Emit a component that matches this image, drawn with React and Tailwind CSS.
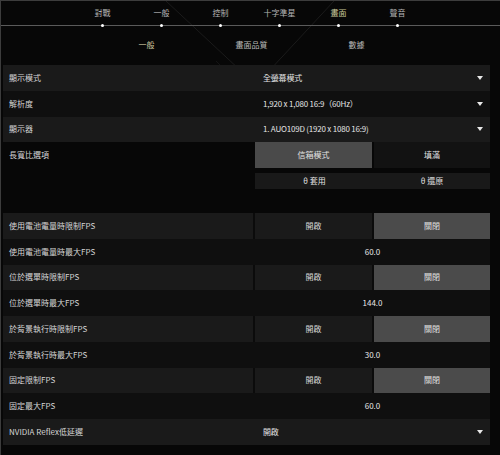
import React from "react";

const FONT = { fontFamily: '"Noto Sans CJK TC", "Noto Sans", sans-serif' };

const navItems = ["對戰", "一般", "控制", "十字準星", "畫面", "聲音"];
const subTabs = ["一般", "畫面品質", "數據"];

function Arrow() {
  return (
    <svg width="6" height="4" viewBox="0 0 6 4" className="shrink-0">
      <path d="M0 0 H6 L3 4 Z" fill="#e8e8e8" />
    </svg>
  );
}

function Label({ children }) {
  return (
    <div className="w-[250px] shrink-0 pl-[6px] text-[8px] text-[#d6d6d6] flex items-center h-full">
      {children}
    </div>
  );
}

function DropdownRow({ label, value, light }) {
  return (
    <div className={`flex h-[25.75px] gap-[2px] ${light ? "bg-[#1a1a1a]" : "bg-[#0f0f0f]"}`}>
      <Label>{label}</Label>
      <div className="flex-1 flex items-center justify-between pl-[8px] pr-[7px] text-[8px] text-[#e4e4e4]">
        <span className="tracking-[-0.2px]">{value}</span>
        <Arrow />
      </div>
    </div>
  );
}

function ToggleRow({ label }) {
  return (
    <div className="flex h-[25.75px] gap-[2px] bg-[#0b0b0b]">
      <div className="w-[250px] shrink-0 bg-[#1a1a1a] h-full">
        <Label>{label}</Label>
      </div>
      <div className="w-[117px] bg-[#1a1a1a] flex items-center justify-center text-[8px] text-[#d8d8d8]">開啟</div>
      <div className="w-[116px] bg-[#4b4b4b] flex items-center justify-center text-[8px] text-[#e0e0e0]">關閉</div>
    </div>
  );
}

function ValueRow({ label, value }) {
  return (
    <div className="flex h-[25.75px] gap-[2px] bg-[#0f0f0f]">
      <Label>{label}</Label>
      <div className="flex-1 flex items-center justify-center text-[8px] text-[#e8e8e8]">{value}</div>
    </div>
  );
}

export default function App() {
  return (
    <div
      className="relative w-[500px] h-[455px] overflow-hidden bg-[#070707] border-t border-l border-[#3c3c3c]"
      style={FONT}
    >
      <svg className="absolute inset-0 pointer-events-none" width="500" height="455" viewBox="0 0 500 455">
        <path d="M165 0 L255 84 L333 0" stroke="#1b1b1b" strokeWidth="1" fill="none" />
        <path d="M215 60 L250 95" stroke="#141414" strokeWidth="1" fill="none" />
        <path d="M100 340 L135 400" stroke="#131313" strokeWidth="1" fill="none" />
      </svg>

      {/* top nav */}
      <div className="relative h-[32px]">
        <div className="absolute left-0 right-0 top-[24px] h-px bg-[#5a5a5a]" />
        <div className="relative flex pl-[72px] pt-[6px]">
          {navItems.map((n, i) => (
            <div key={n} className="w-[59px] flex flex-col items-center">
              <span className={`text-[8px] leading-[12px] ${i === 4 ? "text-[#c9c89b]" : "text-[#b4b4b4]"}`}>{n}</span>
              <span className="mt-[5px] block w-[3px] h-[3px] rounded-full bg-white" />
            </div>
          ))}
        </div>
      </div>

      {/* sub tabs */}
      <div className="relative h-[32px] flex pl-[93px] pt-[6px]">
        {subTabs.map((t, i) => (
          <div key={t} className="w-[105px] flex justify-center">
            <span className={`text-[8px] leading-[12px] ${i === 0 ? "text-[#c9c59d]" : "text-[#bcbcbc]"}`}>{t}</span>
          </div>
        ))}
      </div>

      <div className="relative pl-[2px] w-[489px] flex flex-col">
        <DropdownRow label="顯示模式" value="全螢幕模式" light />
        <DropdownRow label="解析度" value="1,920 x 1,080 16:9（60Hz）" />
        <DropdownRow label="顯示器" value="1. AUO109D (1920 x  1080 16:9)" light />
        <div className="flex h-[25.75px] gap-[2px]">
          <Label>長寬比選項</Label>
          <div className="w-[117px] bg-[#4a4a4a] flex items-center justify-center text-[8px] text-[#e2e2e2]">信箱模式</div>
          <div className="w-[116px] bg-[#121212] flex items-center justify-center text-[8px] text-[#e2e2e2]">填滿</div>
        </div>
        <div className="flex h-[16px] mt-[5px]">
          <div className="w-[252px] shrink-0" />
          <div className="w-[119px] bg-[#191919] flex items-center justify-center text-[8px] text-[#e2e2e2]">θ 套用</div>
          <div className="w-[116px] bg-[#191919] flex items-center justify-center text-[8px] text-[#e2e2e2]">θ 還原</div>
        </div>

        <div className="mt-[24px] flex flex-col">
          <ToggleRow label="使用電池電量時限制FPS" />
          <ValueRow label="使用電池電量時最大FPS" value="60.0" />
          <ToggleRow label="位於選單時限制FPS" />
          <ValueRow label="位於選單時最大FPS" value="144.0" />
          <ToggleRow label="於背景執行時限制FPS" />
          <ValueRow label="於背景執行時最大FPS" value="30.0" />
          <ToggleRow label="固定限制FPS" />
          <ValueRow label="固定最大FPS" value="60.0" />
          <DropdownRow label="NVIDIA Reflex低延遲" value="開啟" light />
        </div>
      </div>
    </div>
  );
}
